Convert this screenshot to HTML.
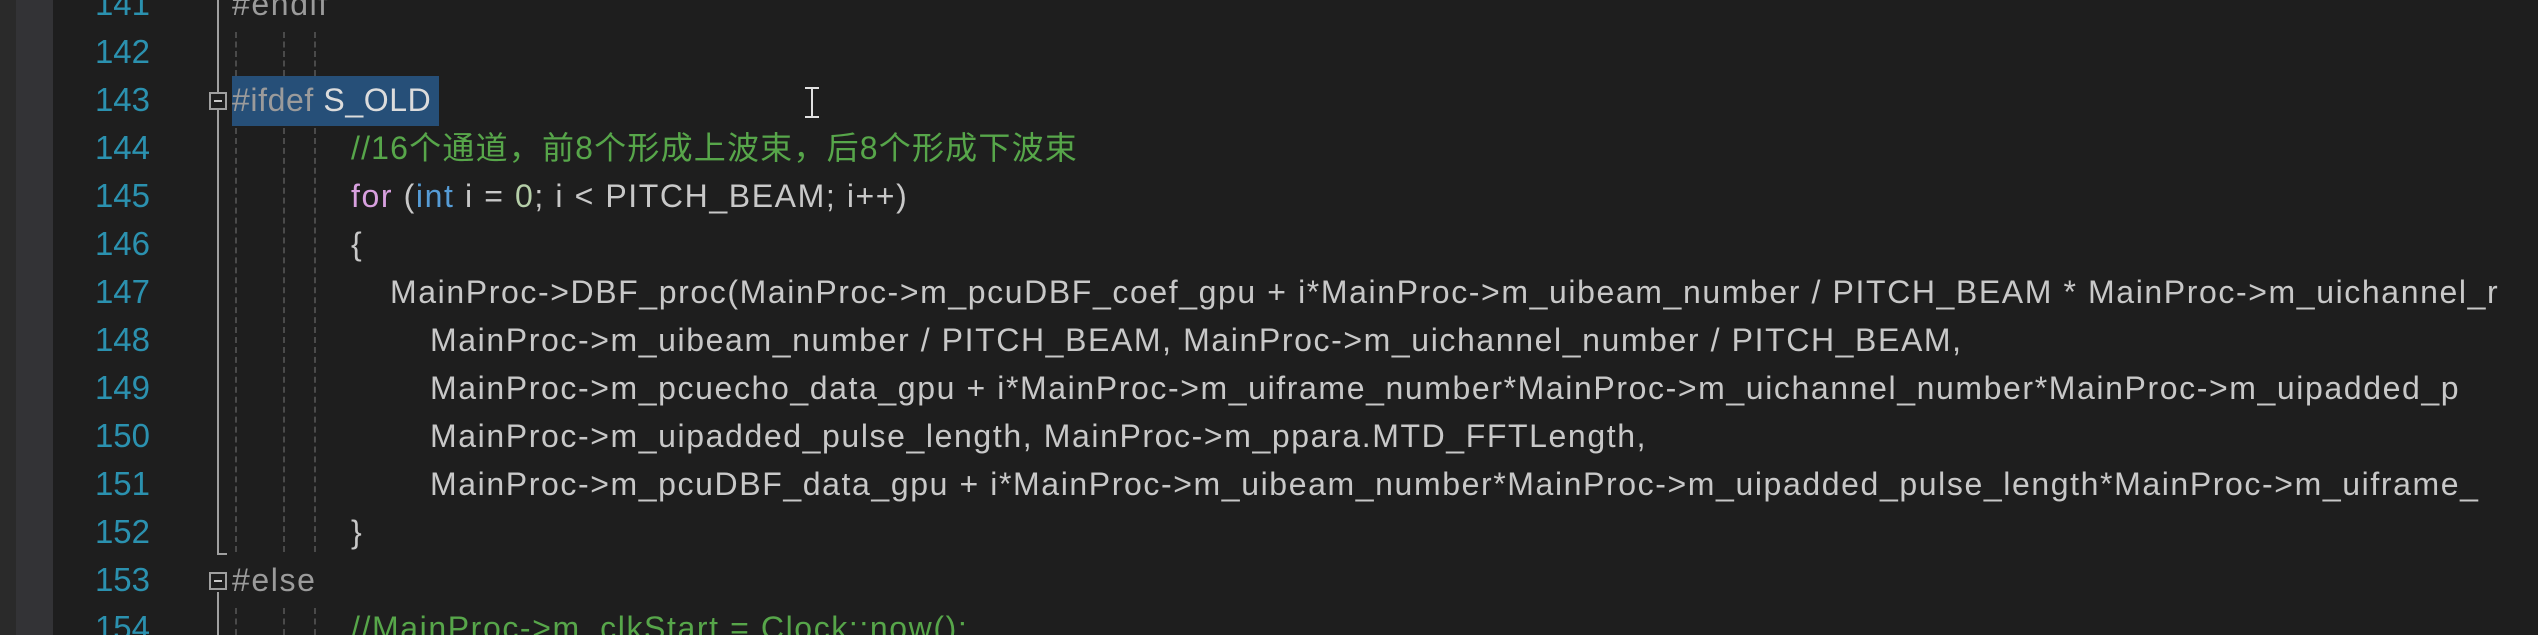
<!DOCTYPE html>
<html><head><meta charset="utf-8"><style>
html,body{margin:0;padding:0;width:2538px;height:635px;overflow:hidden;background:#1e1e1e;}
#wrap{position:absolute;left:0;top:0;width:2538px;height:635px;overflow:hidden;}
.l{position:absolute;white-space:pre;font-family:"Liberation Sans","Noto Sans CJK SC",sans-serif;font-size:32px;line-height:48px;height:48px;color:#c8c8c8;letter-spacing:1.6px;}
.n{position:absolute;width:150px;left:0;text-align:right;font-family:"Liberation Sans",sans-serif;font-size:33px;line-height:48px;color:#2b91af;}
.pp{color:#9b9b9b}.c{color:#57a64a}.k{color:#d8a0df}.t{color:#569cd6}.num{color:#b5cea8}
.dash{position:absolute;width:0;border-left:2px dashed #4a4a4a;}
</style></head><body><div id="wrap">
<div style="position:absolute;left:0;top:0;width:16px;height:635px;background:#2a2a2a"></div>
<div style="position:absolute;left:16px;top:0;width:37px;height:635px;background:#333336"></div>

<div class="n" style="top:-20px">141</div>
<div class="n" style="top:28px">142</div>
<div class="n" style="top:76px">143</div>
<div class="n" style="top:124px">144</div>
<div class="n" style="top:172px">145</div>
<div class="n" style="top:220px">146</div>
<div class="n" style="top:268px">147</div>
<div class="n" style="top:316px">148</div>
<div class="n" style="top:364px">149</div>
<div class="n" style="top:412px">150</div>
<div class="n" style="top:460px">151</div>
<div class="n" style="top:508px">152</div>
<div class="n" style="top:556px">153</div>
<div class="n" style="top:604px">154</div>

<div style="position:absolute;left:217px;top:0;width:2px;height:92px;background:#a0a0a0"></div>
<div style="position:absolute;left:217px;top:110px;width:2px;height:444px;background:#a0a0a0"></div>
<div style="position:absolute;left:217px;top:553px;width:10px;height:2px;background:#a0a0a0"></div>
<div style="position:absolute;left:217px;top:592px;width:2px;height:43px;background:#a0a0a0"></div>
<div style="position:absolute;left:209px;top:92px;width:14px;height:14px;border:2px solid #a0a0a0;background:#1e1e1e"><div style="position:absolute;left:3px;top:6px;width:8px;height:2px;background:#c8c8c8"></div></div>
<div style="position:absolute;left:209px;top:572px;width:14px;height:14px;border:2px solid #a0a0a0;background:#1e1e1e"><div style="position:absolute;left:3px;top:6px;width:8px;height:2px;background:#c8c8c8"></div></div>

<div class="dash" style="left:235px;top:32px;height:44px"></div>
<div class="dash" style="left:283px;top:32px;height:44px"></div>
<div class="dash" style="left:314px;top:32px;height:44px"></div>
<div class="dash" style="left:235px;top:128px;height:424px"></div>
<div class="dash" style="left:283px;top:128px;height:424px"></div>
<div class="dash" style="left:314px;top:128px;height:424px"></div>
<div class="dash" style="left:235px;top:608px;height:27px"></div>
<div class="dash" style="left:283px;top:608px;height:27px"></div>
<div class="dash" style="left:314px;top:608px;height:27px"></div>

<div style="position:absolute;left:232px;top:76px;width:207px;height:50px;background:#264f78"></div>

<div class="l pp" style="left:232px;top:-20px">#endif</div>
<div class="l" style="left:232px;top:76px;letter-spacing:0.6px"><span class="pp">#ifdef</span> <span style="color:#dcdcdc">S_OLD</span></div>
<div class="l c" style="left:351px;top:124px;letter-spacing:1.2px">//16个通道，前8个形成上波束，后8个形成下波束</div>
<div class="l" style="left:351px;top:172px"><span class="k">for</span> (<span class="t">int</span> i = <span class="num">0</span>; i &lt; PITCH_BEAM; i++)</div>
<div class="l" style="left:351px;top:220px">{</div>
<div class="l" style="left:390px;top:268px">MainProc-&gt;DBF_proc(MainProc-&gt;m_pcuDBF_coef_gpu + i*MainProc-&gt;m_uibeam_number / PITCH_BEAM * MainProc-&gt;m_uichannel_r</div>
<div class="l" style="left:430px;top:316px">MainProc-&gt;m_uibeam_number / PITCH_BEAM, MainProc-&gt;m_uichannel_number / PITCH_BEAM,</div>
<div class="l" style="left:430px;top:364px">MainProc-&gt;m_pcuecho_data_gpu + i*MainProc-&gt;m_uiframe_number*MainProc-&gt;m_uichannel_number*MainProc-&gt;m_uipadded_p</div>
<div class="l" style="left:430px;top:412px">MainProc-&gt;m_uipadded_pulse_length, MainProc-&gt;m_ppara.MTD_FFTLength,</div>
<div class="l" style="left:430px;top:460px">MainProc-&gt;m_pcuDBF_data_gpu + i*MainProc-&gt;m_uibeam_number*MainProc-&gt;m_uipadded_pulse_length*MainProc-&gt;m_uiframe_</div>
<div class="l" style="left:351px;top:508px">}</div>
<div class="l pp" style="left:232px;top:556px">#else</div>
<div class="l c" style="left:351px;top:604px">//MainProc-&gt;m_clkStart = Clock::now();</div>

<div style="position:absolute;left:811px;top:88px;width:2px;height:29px;background:#e0e0e0"></div>
<div style="position:absolute;left:805px;top:87px;width:14px;height:2px;background:#e0e0e0"></div>
<div style="position:absolute;left:805px;top:116px;width:14px;height:2px;background:#e0e0e0"></div>
</div></body></html>
